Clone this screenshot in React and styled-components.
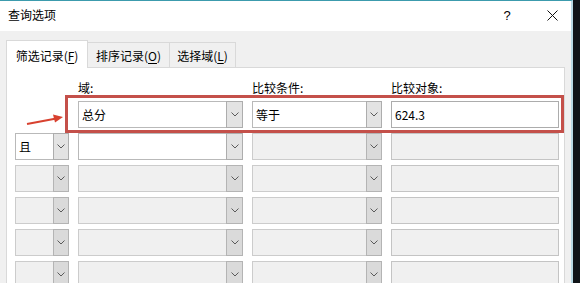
import React from "react";
import styled, { createGlobalStyle } from "styled-components";

const Global = createGlobalStyle`
  html, body { margin: 0; padding: 0; }
  body {
    background: #101418;
    width: 580px;
    height: 283px;
    overflow: hidden;
    font-family: "Noto Sans CJK SC", "Noto Sans", "Liberation Sans", sans-serif;
    font-size: 12px;
    color: #000;
  }
`;

const Window = styled.div`
  width: 573px;
  height: 283px;
  overflow: hidden;
  background: #f0f0f0;
  border-top: 1px solid #3c9bad;
  border-right: 2px solid #b9d9e4;
  box-sizing: border-box;
  display: flex;
  flex-direction: column;
`;

const TitleBar = styled.div`
  height: 30px;
  background: #fff;
  display: flex;
  align-items: center;
  padding-left: 8px;
  flex-shrink: 0;
`;

const Title = styled.div`
  flex: 1;
  font-size: 12px;
  line-height: 16px;
  margin-top: -2px;
`;

const TitleBtn = styled.div`
  width: ${(p) => p.$w}px;
  margin-right: ${(p) => p.$mr || 0}px;
  height: 30px;
  display: flex;
  align-items: center;
  justify-content: center;
  font-family: "Liberation Sans", sans-serif;
  font-size: 13px;
  margin-top: -2px;
`;

const Body = styled.div`
  flex: 1;
  min-height: 0;
  padding: 9px 6px 0 6px;
  display: flex;
  flex-direction: column;
`;

const TabStrip = styled.div`
  display: flex;
  align-items: flex-end;
  height: 28px;
  flex-shrink: 0;
  position: relative;
  z-index: 2;
  margin-bottom: -1px;
`;

const Tab = styled.div`
  width: ${(p) => p.$w}px;
  height: ${(p) => (p.$active ? 28 : 26)}px;
  box-sizing: border-box;
  border: 1px solid #d9d9d9;
  border-bottom: ${(p) => (p.$active ? "none" : "1px solid #d9d9d9")};
  border-left: ${(p) => (p.$first || p.$active ? "1px solid #d9d9d9" : "none")};
  background: ${(p) => (p.$active ? "#fff" : "#f0f0f0")};
  display: flex;
  align-items: center;
  justify-content: center;
  padding-top: ${(p) => (p.$active ? 2 : 0)}px;
  font-size: 12px;
  white-space: nowrap;
  u { text-underline-offset: 2px; }
`;

const Panel = styled.div`
  flex: 1;
  position: relative;
  overflow: hidden;
  background: #fff;
  border: 1px solid #d9d9d9;
  border-bottom: none;
  box-sizing: border-box;
  padding: 11px 0 0 8px;
`;

const Grid = styled.div`
  display: grid;
  grid-template-columns: 54px 165px 130px 168px;
  grid-auto-rows: 27px;
  grid-template-rows: 17px;
  column-gap: 9px;
  row-gap: 5px;
`;

const Label = styled.div`
  font-size: 12px;
  line-height: 17px;
  white-space: nowrap;
`;

const Combo = styled.div`
  box-sizing: border-box;
  height: 27px;
  display: flex;
  border: 1px solid ${(p) => (p.$disabled ? "#cccccc" : "#b9b9b9")};
  background: ${(p) => (p.$disabled ? "#f0f0f0" : "#fff")};
`;

const ComboText = styled.div`
  flex: 1;
  padding-left: 3px;
  line-height: 25px;
  font-size: 12px;
  white-space: nowrap;
  overflow: hidden;
`;

const DropBtn = styled.div`
  width: ${(p) => p.$w || 16}px;
  margin: -1px -1px -1px 0;
  box-sizing: border-box;
  border: 1px solid ${(p) => (p.$disabled ? "#b4b4b4" : "#adadad")};
  background: ${(p) => (p.$disabled ? "#dadada" : "#e3e3e3")};
  display: flex;
  align-items: center;
  justify-content: center;
`;

const TextBox = styled.div`
  box-sizing: border-box;
  height: 27px;
  border: 1px solid ${(p) => (p.$disabled ? "#c4c4c4" : "#acacac")};
  background: ${(p) => (p.$disabled ? "#f0f0f0" : "#fff")};
  padding-left: 3px;
  line-height: 25px;
  font-size: 12px;
`;

const Spacer = styled.div``;

const Highlight = styled.div`
  position: absolute;
  left: 58px;
  top: 27px;
  width: 499px;
  height: 38px;
  box-sizing: border-box;
  border: 3px solid #c4504a;
  pointer-events: none;
`;

const ArrowSvg = styled.svg`
  position: absolute;
  left: 18px;
  top: 44px;
`;

const Chevron = () => (
  <svg width="8" height="5" viewBox="0 0 8 5">
    <polyline points="0.5,0.5 4,4 7.5,0.5" fill="none" stroke="#5a5a5a" strokeWidth="1" />
  </svg>
);

const ComboBox = ({ text, disabled, btn }) => (
  <Combo $disabled={disabled}>
    <ComboText>{text}</ComboText>
    <DropBtn $disabled={disabled} $w={btn}>
      <Chevron />
    </DropBtn>
  </Combo>
);

export default function App() {
  const disabledRows = [0, 1, 2, 3];
  return (
    <>
      <Global />
      <Window>
        <TitleBar>
          <Title>查询选项</Title>
          <TitleBtn $w={20} $mr={17}>?</TitleBtn>
          <TitleBtn $w={37}>
            <svg width="11" height="11" viewBox="0 0 11 11">
              <path d="M0.5 0.5 L10.5 10.5 M10.5 0.5 L0.5 10.5" stroke="#111" strokeWidth="1" />
            </svg>
          </TitleBtn>
        </TitleBar>
        <Body>
          <TabStrip>
            <Tab $w={82} $active $first>
              筛选记录(<u>F</u>)
            </Tab>
            <Tab $w={82}>
              排序记录(<u>O</u>)
            </Tab>
            <Tab $w={66}>
              选择域(<u>L</u>)
            </Tab>
          </TabStrip>
          <Panel>
            <Grid>
              <Spacer />
              <Label>域:</Label>
              <Label>比较条件:</Label>
              <Label>比较对象:</Label>

              <Spacer />
              <ComboBox text="总分" btn={17} />
              <ComboBox text="等于" />
              <TextBox>624.3</TextBox>

              <ComboBox text="且" />
              <ComboBox text="" btn={17} />
              <ComboBox text="" disabled />
              <TextBox $disabled />

              {disabledRows.map((r) => (
                <React.Fragment key={r}>
                  <ComboBox text="" disabled />
                  <ComboBox text="" disabled btn={17} />
                  <ComboBox text="" disabled />
                  <TextBox $disabled />
                </React.Fragment>
              ))}
            </Grid>
            <Highlight />
            <ArrowSvg width="38" height="16" viewBox="0 0 38 16">
              <line x1="2" y1="12" x2="30" y2="6.8" stroke="#d8412f" strokeWidth="2" />
              <polygon points="38,5 28,2.5 30,10.5" fill="#d8412f" />
            </ArrowSvg>
          </Panel>
        </Body>
      </Window>
    </>
  );
}
